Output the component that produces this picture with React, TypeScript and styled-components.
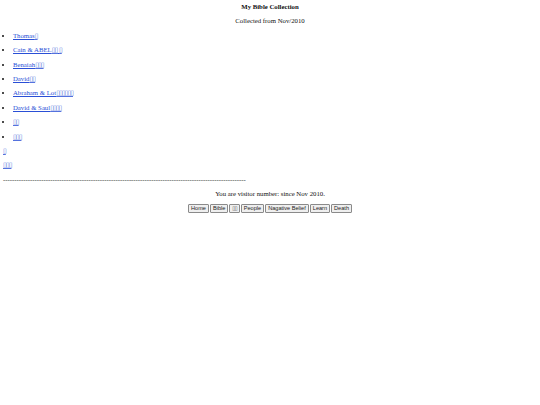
import React from 'react';
import styled, { createGlobalStyle } from 'styled-components';

const GlobalStyle = createGlobalStyle`
  html, body {
    margin: 0;
    padding: 0;
    background: #ffffff;
  }
  body {
    font-family: "Liberation Serif", "Times New Roman", serif;
    font-size: 6.75px;
    color: #111111;
  }
`;

const Page = styled.div`
  padding: 0 3px;
`;

const Line = styled.div<{ $center?: boolean; $bold?: boolean }>`
  height: 14.4px;
  line-height: 14.4px;
  text-align: ${props => (props.$center ? 'center' : 'left')};
  font-weight: ${props => (props.$bold ? 'bold' : 'normal')};
  white-space: nowrap;
`;

const List = styled.ul`
  margin: 0;
  padding: 0 0 0 10px;
  list-style: disc;
`;

const Item = styled.li`
  height: 14.4px;
  line-height: 14.4px;
`;

const Link = styled.a`
  color: #2a4fd6;
  text-decoration: underline;
`;

// a glyph that the page's font could not draw: shown as an empty box
const Tofu = styled.span`
  font-family: "DejaVu Sans", sans-serif;
  font-weight: normal;
  letter-spacing: -0.9px;
  opacity: 0.8;
`;

const Nav = styled.div`
  display: flex;
  justify-content: center;
  align-items: center;
  gap: 1px;
  height: 14.4px;
`;

const NavButton = styled.button`
  font-family: "Liberation Sans", Arial, sans-serif;
  font-size: 5.6px;
  height: 9px;
  line-height: 7px;
  padding: 0 2px;
  margin: 0;
  background: #efefef;
  border: 1px solid #8a8a8a;
  border-radius: 1px;
  color: #222;
`;

// '#' marks a missing glyph
const Label = ({ text }: { text: string }) => (
  <>
    {text.split(/(#+)/).map((part, i) =>
      part.startsWith('#') ? <Tofu key={i}>{part.replace(/#/g, '\u25AF')}</Tofu> : part
    )}
  </>
);

const items = [
  'Thomas#',
  'Cain & ABEL## #',
  'Benaiah###',
  'David##',
  'Abraham & Lot######',
  'David & Saul####',
  '##',
  '###',
];

const buttons = ['Home', 'Bible', '##', 'People', 'Nagative Belief', 'Learn', 'Death'];

export default function App() {
  return (
    <>
      <GlobalStyle />
      <Page>
        <Line $center $bold>My Bible Collection</Line>
        <Line $center>Collected from Nov/2010</Line>
        <List>
          {items.map(item => (
            <Item key={item}>
              <Link href="#">
                <Label text={item} />
              </Link>
            </Item>
          ))}
        </List>
        <Line>
          <Link href="#">
            <Label text="#" />
          </Link>
        </Line>
        <Line>
          <Link href="#">
            <Label text="###" />
          </Link>
        </Line>
        <Line>{'-'.repeat(108)}</Line>
        <Line $center>You are visitor number: since Nov 2010.</Line>
        <Nav>
          {buttons.map(b => (
            <NavButton key={b}>
              <Label text={b} />
            </NavButton>
          ))}
        </Nav>
      </Page>
    </>
  );
}
